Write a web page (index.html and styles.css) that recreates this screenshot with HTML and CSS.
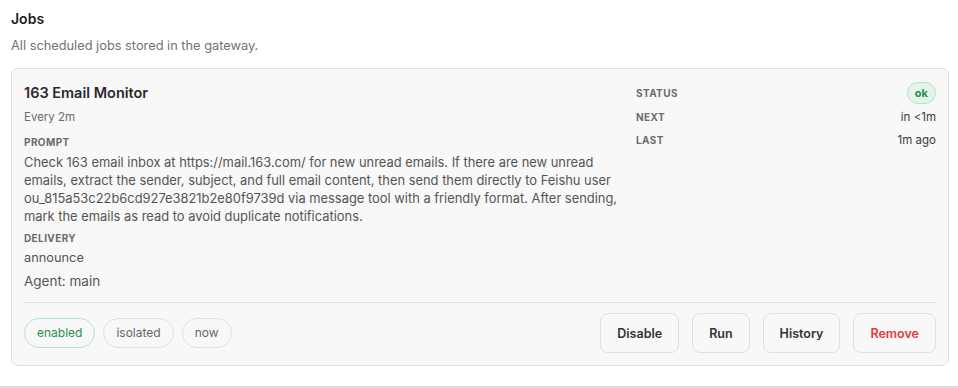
FILE: index.html
```html
<!DOCTYPE html>
<html lang="en">
<head>
  <meta charset="UTF-8">
  <meta name="viewport" content="width=device-width, initial-scale=1.0">
  <title>Jobs</title>
  <link rel="stylesheet" href="styles.css">
</head>
<body>
<div class="section">
  <div class="section-title">Jobs</div>
  <div class="section-sub">All scheduled jobs stored in the gateway.</div>

  <div class="job-card">
    <div class="job-grid">
      <div class="job-main">
        <div class="job-name">163 Email Monitor</div>
        <div class="job-schedule">Every 2m</div>
        <div class="label">Prompt</div>
        <div class="prompt">Check 163 email inbox at https://mail.163.com/ for new unread emails. If there are new unread emails, extract the sender, subject, and full email content, then send them directly to Feishu user ou_815a53c22b6cd927e3821b2e80f9739d via message tool with a friendly format. After sending, mark the emails as read to avoid duplicate notifications.</div>
        <div class="label label-delivery">Delivery</div>
        <div class="delivery">announce</div>
        <div class="agent">Agent: main</div>
      </div>
      <div class="job-meta">
        <div class="meta-row">
          <span class="label">Status</span>
          <span class="badge-ok">ok</span>
        </div>
        <div class="meta-row">
          <span class="label">Next</span>
          <span class="meta-value">in &lt;1m</span>
        </div>
        <div class="meta-row">
          <span class="label">Last</span>
          <span class="meta-value">1m ago</span>
        </div>
      </div>
    </div>

    <div class="job-footer">
      <div class="chips">
        <span class="chip chip-on">enabled</span>
        <span class="chip">isolated</span>
        <span class="chip">now</span>
      </div>
      <div class="actions">
        <button class="btn">Disable</button>
        <button class="btn">Run</button>
        <button class="btn">History</button>
        <button class="btn btn-danger">Remove</button>
      </div>
    </div>
  </div>
</div>
<div class="page-end"></div>
</body>
</html>
```

FILE: styles.css
```css
body {
  font-family: Inter, "Noto Sans", sans-serif;
  background-color: #ffffff;
  color: #2b2b2b;
  margin: 0;
  padding: 0;
}
.section {
  padding: 10px 9px 20px 11px;
}
.section-title {
  font-size: 14px;
  font-weight: 600;
  color: #1d1d1d;
  line-height: 18px;
}
.section-sub {
  margin-top: 10px;
  font-size: 12.8px;
  color: #727272;
  line-height: 16px;
}
.job-card {
  margin-top: 14px;
  background-color: #f8f8f8;
  border: 1px solid #dedede;
  border-radius: 7px;
  padding: 13px 12px 12px 12px;
}
.job-grid {
  display: grid;
  grid-template-columns: 1fr 300px;
  gap: 16px;
}
.job-name {
  font-size: 14.5px;
  font-weight: 600;
  color: #2a2a2a;
  line-height: 22px;
}
.job-schedule {
  margin-top: 4px;
  font-size: 11.5px;
  color: #6a6a6a;
  line-height: 18px;
}
.label {
  font-size: 10px;
  font-weight: 700;
  letter-spacing: 0.04em;
  text-transform: uppercase;
  color: #6b6b6b;
  line-height: 16px;
}
.job-main .label {
  margin-top: 8px;
}
.job-main .label-delivery {
  margin-top: 4px;
}
.prompt {
  margin-top: 4px;
  font-size: 12.9px;
  color: #555555;
  line-height: 18px;
}
.delivery {
  margin-top: 3px;
  font-size: 12.8px;
  color: #555555;
  line-height: 18px;
}
.agent {
  margin-top: 4px;
  font-size: 13.5px;
  color: #555555;
  line-height: 20px;
}
.job-meta {
  display: flex;
  flex-direction: column;
  gap: 3px;
}
.meta-row {
  display: flex;
  justify-content: space-between;
  align-items: center;
  min-height: 20px;
}
.meta-row:first-child {
  min-height: 22px;
}
.meta-value {
  font-size: 11.5px;
  color: #3a3a3a;
}
.badge-ok {
  background-color: #e2f5e8;
  border: 1px solid #b6e3c4;
  color: #23914f;
  font-size: 11px;
  font-weight: 700;
  border-radius: 999px;
  padding: 3px 7px;
  line-height: 14px;
}
.job-footer {
  margin-top: 11px;
  padding-top: 10px;
  border-top: 1px solid #e2e2e2;
  display: flex;
  justify-content: space-between;
  align-items: center;
}
.chips {
  display: flex;
  gap: 8px;
}
.chip {
  border: 1px solid #e0e0e0;
  border-radius: 999px;
  padding: 6px 12px;
  font-size: 12px;
  color: #666666;
  line-height: 16px;
}
.chip-on {
  border-color: #b4e6c4;
  color: #23914f;
}
.actions {
  display: flex;
  gap: 13px;
}
.btn {
  font-family: inherit;
  background-color: #f8f8f8;
  border: 1px solid #e0e0e0;
  border-radius: 8px;
  padding: 0 16px;
  height: 40px;
  font-size: 12.5px;
  font-weight: 600;
  color: #333333;
  cursor: pointer;
}
.btn-danger {
  color: #e5383b;
}
.page-end {
  height: 3px;
  background-color: #e6e6e6;
  border-top: 1px solid #d6d6d6;
}
```
